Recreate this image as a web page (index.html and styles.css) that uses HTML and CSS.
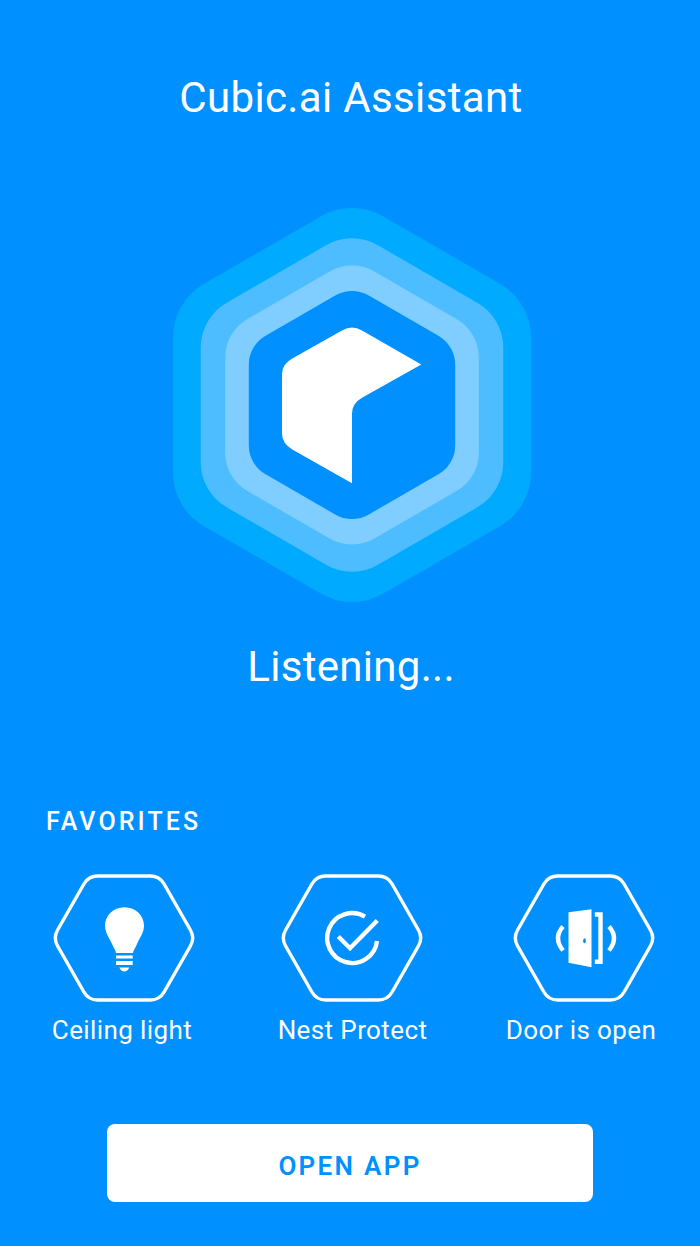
FILE: index.html
```html
<!DOCTYPE html>
<html lang="en">
  <head>
    <meta charset="UTF-8" />
    <meta name="viewport" content="width=device-width, initial-scale=1.0" />
    <title>Cubic.ai Assistant</title>

    <link rel="stylesheet" href="styles.css">
  </head>
  <body>
    <main class="screen">
      <h1 class="title">Cubic.ai Assistant</h1>

      <svg class="logo" width="360" height="396" viewBox="-180 -198 360 396">
        <path class="logo__ring-1" d="M-31 -188.8A62 62 0 0 1 31 -188.8L148 -121.25A62 62 0 0 1 179 -67.55V67.55A62 62 0 0 1 148 121.25L31 188.8A62 62 0 0 1 -31 188.8L-148 121.25A62 62 0 0 1 -179 67.55V-67.55A62 62 0 0 1 -148 -121.25Z" />
        <path class="logo__ring-2" d="M-26 -159.7A52 52 0 0 1 26 -159.7L125.3 -102.35A52 52 0 0 1 151.3 -57.35V57.35A52 52 0 0 1 125.3 102.35L26 159.7A52 52 0 0 1 -26 159.7L-125.3 102.35A52 52 0 0 1 -151.3 57.35V-57.35A52 52 0 0 1 -125.3 -102.35Z" />
        <path class="logo__ring-3" d="M-22.3 -133.5A44.6 44.6 0 0 1 22.3 -133.5L104.5 -86.1A44.6 44.6 0 0 1 126.8 -47.45V47.45A44.6 44.6 0 0 1 104.5 86.1L22.3 133.5A44.6 44.6 0 0 1 -22.3 133.5L-104.5 86.1A44.6 44.6 0 0 1 -126.8 47.45V-47.45A44.6 44.6 0 0 1 -104.5 -86.1Z" />
        <path class="logo__core" d="M-16.8 -109.5A33.6 33.6 0 0 1 16.8 -109.5L86.4 -69.3A33.6 33.6 0 0 1 103.2 -40.2V40.2A33.6 33.6 0 0 1 86.4 69.3L16.8 109.5A33.6 33.6 0 0 1 -16.8 109.5L-86.4 69.3A33.6 33.6 0 0 1 -103.2 40.2V-40.2A33.6 33.6 0 0 1 -86.4 -69.3Z" />
        <path class="logo__cube" d="M-10 -74.5Q0 -80.5 10 -74.5L69.3 -40.5L10 -7.2Q0 -1.5 0 8.8V78.2L-59.3 44.8Q-70 38.5 -70 28.8V-31.2Q-70 -41 -59.3 -46.8Z" />
      </svg>

      <p class="status">Listening...</p>

      <section class="favorites">
        <h2 class="favorites__heading">FAVORITES</h2>
        <ul class="favorites__list">
          <li class="fav fav--light">
            <svg class="fav__icon" width="144" height="130" viewBox="-72 -65 144 130">
              <path class="fav__hex" d="M-26.3 -62H26.3A16 16 0 0 1 40.1 -54L66.4 -8A16 16 0 0 1 66.4 8L40.1 54A16 16 0 0 1 26.3 62H-26.3A16 16 0 0 1 -40.1 54L-66.4 8A16 16 0 0 1 -66.4 -8L-40.1 -54A16 16 0 0 1 -26.3 -62Z" />
              <path class="fav__fill" d="M.5 -30.8C12 -30.8 20 -22 20 -12.5C20 -5 16 -1 13 6C11.5 9.5 9.5 12 9 15H-8C-8.5 12 -10.5 9.5 -12 6C-15 -1 -19 -5 -19 -12.5C-19 -22 -11 -30.8 .5 -30.8Z" />
              <path class="fav__fill" d="M-8 17.5H8.7V20.5H-8ZM-8 23H8.7V27H-8ZM-4.7 29.5H5.3Q3.5 33.5 .3 33.5Q-3 33.5 -4.7 29.5Z" />
            </svg>
            <span class="fav__label">Ceiling light</span>
          </li>
          <li class="fav fav--nest">
            <svg class="fav__icon" width="144" height="130" viewBox="-72 -65 144 130">
              <path class="fav__hex" d="M-26.3 -62H26.3A16 16 0 0 1 40.1 -54L66.4 -8A16 16 0 0 1 66.4 8L40.1 54A16 16 0 0 1 26.3 62H-26.3A16 16 0 0 1 -40.1 54L-66.4 8A16 16 0 0 1 -66.4 -8L-40.1 -54A16 16 0 0 1 -26.3 -62Z" />
              <path class="fav__line" d="M25 3A25 25 0 1 1 13 -21.4" />
              <path class="fav__line" d="M-13.7 -1.5L-2 10.2L25.3 -17.5" />
            </svg>
            <span class="fav__label">Nest Protect</span>
          </li>
          <li class="fav fav--door">
            <svg class="fav__icon" width="144" height="130" viewBox="-72 -65 144 130">
              <path class="fav__hex" d="M-26.3 -62H26.3A16 16 0 0 1 40.1 -54L66.4 -8A16 16 0 0 1 66.4 8L40.1 54A16 16 0 0 1 26.3 62H-26.3A16 16 0 0 1 -40.1 54L-66.4 8A16 16 0 0 1 -66.4 -8L-40.1 -54A16 16 0 0 1 -26.3 -62Z" />
              <path class="fav__fill" d="M-15.5 -25.8L7.5 -28.8V29.2L-15.5 24.8Z" />
              <ellipse class="fav__keyhole" cx=".5" cy="2.8" rx="1.4" ry="2.5" />
              <path class="fav__line" d="M10.8 -23.5H16.5V23.7H10.8" />
              <path class="fav__line" d="M-21 -11.5Q-31 0 -21 12.5" />
              <path class="fav__line" d="M25 -11.5Q35 0 25 12.5" />
            </svg>
            <span class="fav__label">Door is open</span>
          </li>
        </ul>
      </section>

      <button class="open-btn" type="button">OPEN APP</button>
    </main>
  </body>
</html>
```

FILE: styles.css
```css
* {
  margin: 0;
  padding: 0;
  box-sizing: border-box;
}

:root {
  font-family: Roboto, "Liberation Sans", sans-serif;
}

body {
  background: #0090ff;
  color: #fff;
}

.screen {
  display: flex;
  flex-direction: column;
  align-items: center;
  height: 1246px;
  overflow: hidden;
  padding-top: 73px;
}

.title {
  margin-left: 2px;
  font-size: 42px;
  font-weight: 400;
  line-height: 50px;
  letter-spacing: 0.35px;
}

.logo {
  display: block;
  margin-top: 84px;
  margin-left: 4px;
}

.logo__ring-1 {
  fill: #00aaff;
}

.logo__ring-2 {
  fill: #4dbdff;
}

.logo__ring-3 {
  fill: #80ceff;
}

.logo__core {
  fill: #0090ff;
}

.logo__cube {
  fill: #fff;
}

.status {
  margin-top: 39px;
  margin-left: 2px;
  font-size: 42px;
  line-height: 50px;
  letter-spacing: 0.3px;
}

.favorites {
  align-self: stretch;
  margin-top: 115px;
  padding-left: 46px;
}

.favorites__heading {
  font-size: 25px;
  font-weight: 500;
  line-height: 30px;
  letter-spacing: 3.1px;
}

.favorites__list {
  display: flex;
  gap: 70px;
  margin-top: 36px;
  margin-left: -3px;
  list-style: none;
}

.fav {
  display: flex;
  flex-direction: column;
  align-items: center;
  width: 160px;
}

.fav__icon {
  display: block;
}

/* the hexagons and their captions don't share a centre line in the design */
.fav--light .fav__icon {
  margin-left: 2px;
}

.fav--light .fav__label {
  margin-right: 2px;
}

.fav--nest .fav__icon {
  margin-right: 2px;
}

.fav--nest .fav__label {
  margin-right: 1px;
}

.fav--door .fav__icon {
  margin-left: 1px;
}

.fav--door .fav__label {
  margin-right: 4px;
}

.fav__hex {
  fill: none;
  stroke: #fff;
  stroke-width: 3.4;
}

.fav__fill {
  fill: #fff;
}

.fav__keyhole {
  fill: #0090ff;
}

.fav__line {
  fill: none;
  stroke: #fff;
  stroke-width: 4.4;
}

.fav__label {
  margin-top: 12px;
  font-size: 26px;
  line-height: 30px;
  letter-spacing: 0.4px;
  white-space: nowrap;
}

.open-btn {
  width: 486px;
  height: 78px;
  margin-top: 79px;
  padding-top: 6px;
  border: none;
  border-radius: 8px;
  background: #fff;
  color: #0090ff;
  font-family: inherit;
  font-size: 26px;
  font-weight: 600;
  letter-spacing: 2.3px;
}
```
